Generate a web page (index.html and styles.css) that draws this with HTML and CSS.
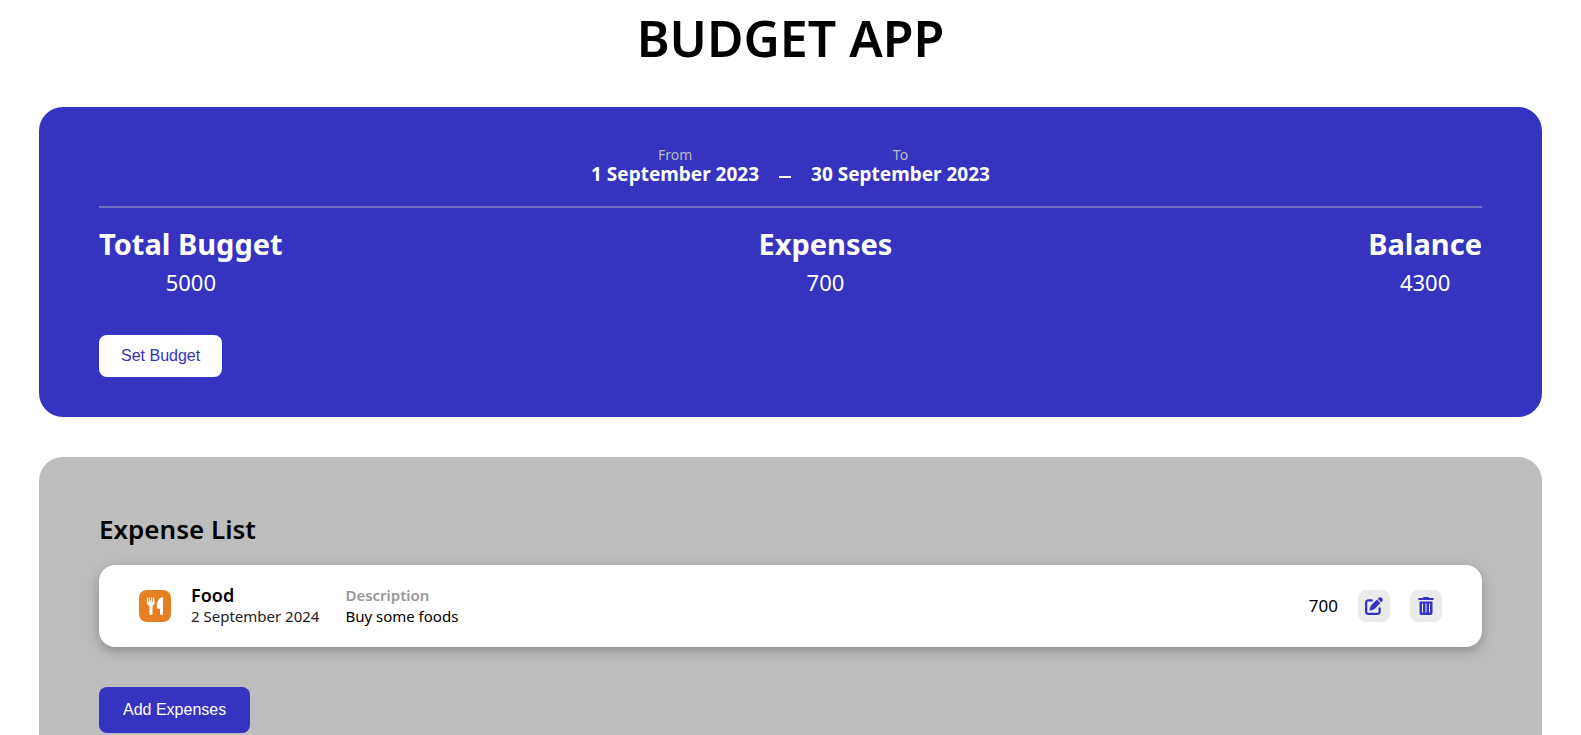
FILE: index.html
```
<!DOCTYPE html>
<html lang="en">
<head>
<meta charset="utf-8">
<title>Budget App</title>
<link rel="stylesheet" href="styles.css">
</head>
<body>
<h1 class="title">BUDGET APP</h1>
<main class="page">
  <section class="summary">
    <div class="period">
      <div class="period-end"><span class="period-label">From</span><strong class="period-date">1 September 2023</strong></div>
      <span class="dash"></span>
      <div class="period-end"><span class="period-label">To</span><strong class="period-date">30 September 2023</strong></div>
    </div>
    <div class="totals">
      <div class="total"><h2 class="total-name">Total Bugget</h2><p class="total-value">5000</p></div>
      <div class="total"><h2 class="total-name">Expenses</h2><p class="total-value">700</p></div>
      <div class="total"><h2 class="total-name">Balance</h2><p class="total-value">4300</p></div>
    </div>
    <button class="button button-light" type="button">Set Budget</button>
  </section>
  <section class="expenses">
    <h2 class="list-title">Expense List</h2>
    <article class="expense">
      <span class="category">
        <svg viewBox="0 0 18 18" width="18" height="18" aria-hidden="true"><path fill="#fff" d="M1.6 0.3c.5 0 .6.2.6.6v4h.6l.3-4.1c0-.6 1-.6 1 0l.2 4.1h.5L5.100.8c0-.6 1-.6 1 0l.3 4.100h.5V.9c0-.8 1.100-.8 1.200 0L8.700 5c0 2-.8 3.200-2.200 3.900v8c0 1.400-3 1.400-3 0v-8C1.500 8.200.7 7 .8 5L1.100.9c0-.4.2-.6.5-.6z"/><path fill="#fff" d="M16 .3c.6 0 1 .4 1 1V17c0 1.200-3 1.200-3 0v-5.200h-1.500c-1 0-1.700-.7-1.700-1.700C10.800 5 12.800 1 16 .3z"/></svg>
      </span>
      <div class="detail">
        <h3 class="expense-name">Food</h3>
        <p class="expense-date">2 September 2024</p>
      </div>
      <div class="detail description">
        <h4 class="description-label">Description</h4>
        <p class="description-text">Buy some foods</p>
      </div>
      <span class="amount">700</span>
      <button class="icon-button" type="button" aria-label="Edit expense">
        <svg viewBox="0 0 512 512" width="18" height="18" aria-hidden="true"><path fill="currentColor" d="M471.600 21.700c-21.900-21.900-57.300-21.900-79.200 0L362.300 51.700l97.900 97.900 30.100-30.100c21.900-21.900 21.900-57.300 0-79.200L471.600 21.700zm-299.200 220c-6.100 6.100-10.800 13.600-13.500 21.900l-29.600 88.800c-2.900 8.600-.6 18.100 5.800 24.600s15.900 8.700 24.600 5.800l88.800-29.600c8.200-2.700 15.700-7.400 21.900-13.500L437.700 172.300 339.700 74.300 172.400 241.700zM96 64C43 64 0 107 0 160V416c0 53 43 96 96 96H352c53 0 96-43 96-96V320c0-17.700-14.300-32-32-32s-32 14.300-32 32v96c0 17.700-14.300 32-32 32H96c-17.700 0-32-14.300-32-32V160c0-17.700 14.300-32 32-32h96c17.700 0 32-14.300 32-32s-14.300-32-32-32H96z"/></svg>
      </button>
      <button class="icon-button" type="button" aria-label="Delete expense">
        <svg viewBox="0 0 18 18" width="18" height="18" aria-hidden="true"><path fill="currentColor" fill-rule="evenodd" d="M6.500 0h5l.8 1H16.200c.8 0 .8 1.900 0 1.900H1.800c-.8 0-.8-1.900 0-1.900h3.900zM2.500 4.500h13V16a2 2 0 0 1-2 2h-9a2 2 0 0 1-2-2zM5 6.500v9h1v-9zm3.500 0v9h1v-9zm3.500 0v9h1v-9z"/></svg>
      </button>
    </article>
    <button class="button button-primary" type="button">Add Expenses</button>
  </section>
</main>
</body>
</html>
```
FILE: styles.css
```
* {
  box-sizing: border-box;
  margin: 0;
  padding: 0;
}

body {
  font-family: "Noto Sans", "Open Sans", sans-serif;
  color: #000;
  background: #fff;
}

.title {
  padding: 8px 0 39px;
  font-size: 50px;
  font-weight: 600;
  line-height: 60px;
  text-align: center;
}

.page {
  display: grid;
  gap: 40px;
  margin: 0 39px;
}

.summary {
  padding: 40px 60px;
  color: #fff;
  background: #3533bf;
  border-radius: 24px;
}

.period {
  display: flex;
  justify-content: center;
  gap: 20px;
  padding-bottom: 21px;
  border-bottom: 2px solid #716fc0;
}

.period-end {
  display: flex;
  flex-direction: column;
  align-items: center;
}

.period-label {
  font-size: 14px;
  line-height: 16px;
  color: #bdbdbd;
}

.period-date {
  font-size: 19px;
  line-height: 22px;
}

.dash {
  align-self: flex-end;
  width: 12px;
  height: 2px;
  margin-bottom: 7px;
  background: #fff;
}

.totals {
  display: flex;
  justify-content: space-between;
  padding: 19px 0 40px;
}

.total {
  text-align: center;
}

.total-name {
  font-size: 29px;
  line-height: 34px;
}

.total-value {
  padding-top: 8px;
  font-size: 22px;
  line-height: 26px;
}

.button {
  display: block;
  border: 0;
  border-radius: 8px;
  font-family: "Liberation Sans", Arial, sans-serif;
  font-size: 16px;
  line-height: 18px;
}

.button-light {
  padding: 12px 22px;
  color: #3533bf;
  background: #fff;
}

.button-primary {
  padding: 14px 24px;
  color: #fff;
  background: #3533bf;
}

.expenses {
  padding: 58px 60px 60px;
  background: #bdbdbd;
  border-radius: 24px;
}

.list-title {
  font-size: 26px;
  font-weight: 600;
  line-height: 28px;
}

.expense {
  display: flex;
  align-items: center;
  gap: 20px;
  margin: 22px 0 40px;
  padding: 20px 40px;
  background: #fff;
  border-radius: 16px;
  box-shadow: 0 4px 12px rgba(0, 0, 0, 0.26);
}

.category,
.icon-button {
  display: grid;
  place-items: center;
  width: 32px;
  height: 32px;
  border: 0;
  border-radius: 8px;
}

.category {
  background: #e67e22;
}

.icon-button {
  color: #3533bf;
  background: #ebebeb;
}

.expense-name {
  font-size: 18px;
  font-weight: 600;
  line-height: 20px;
}

.expense-date,
.description-label,
.description-text {
  font-size: 15px;
  line-height: 22px;
}

.expense-date {
  color: #222;
}

.description {
  margin-left: 6px;
}

.description-label {
  font-weight: 600;
  line-height: 20px;
  color: #999;
}

.amount {
  margin-left: auto;
  font-size: 17px;
  line-height: 22px;
}
```
